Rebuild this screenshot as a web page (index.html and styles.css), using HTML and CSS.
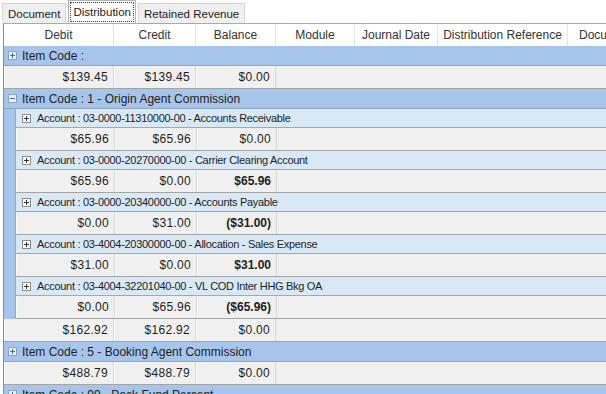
FILE: index.html
```html
<!DOCTYPE html>
<html lang="en">
<head>
  <meta charset="UTF-8">
  <title>Distribution</title>
  <link rel="stylesheet" href="styles.css">
</head>
<body>
  <div class="tabs">
    <div class="tab">Document</div>
    <div class="tab active"><span class="focus">Distribution</span></div>
    <div class="tab">Retained Revenue</div>
  </div>

  <div class="grid">
    <div class="head">
      <div class="hc c-debit">Debit</div>
      <div class="hc c-credit">Credit</div>
      <div class="hc c-bal">Balance</div>
      <div class="hc c-mod">Module</div>
      <div class="hc c-date">Journal Date</div>
      <div class="hc c-ref">Distribution Reference</div>
      <div class="hc c-doc">Document</div>
    </div>

    <div class="group"><span class="tog plus"></span>Item Code :</div>
    <div class="vals">
      <div class="vc c-debit">$139.45</div>
      <div class="vc c-credit">$139.45</div>
      <div class="vc c-bal">$0.00</div>
    </div>

    <div class="group"><span class="tog minus"></span>Item Code : 1 - Origin Agent Commission</div>
    <div class="nest">
      <div class="strip"></div>
      <div class="nest-body">
        <div class="acct"><span class="box"></span>Account : 03-0000-11310000-00 - Accounts Receivable</div>
        <div class="vals">
          <div class="vc c-debit">$65.96</div>
          <div class="vc c-credit">$65.96</div>
          <div class="vc c-bal">$0.00</div>
        </div>
        <div class="acct"><span class="box"></span>Account : 03-0000-20270000-00 - Carrier Clearing Account</div>
        <div class="vals">
          <div class="vc c-debit">$65.96</div>
          <div class="vc c-credit">$0.00</div>
          <div class="vc c-bal strong">$65.96</div>
        </div>
        <div class="acct"><span class="box"></span>Account : 03-0000-20340000-00 - Accounts Payable</div>
        <div class="vals">
          <div class="vc c-debit">$0.00</div>
          <div class="vc c-credit">$31.00</div>
          <div class="vc c-bal strong">($31.00)</div>
        </div>
        <div class="acct"><span class="box"></span>Account : 03-4004-20300000-00 - Allocation - Sales Expense</div>
        <div class="vals">
          <div class="vc c-debit">$31.00</div>
          <div class="vc c-credit">$0.00</div>
          <div class="vc c-bal strong">$31.00</div>
        </div>
        <div class="acct"><span class="box"></span>Account : 03-4004-32201040-00 - VL COD Inter HHG Bkg OA</div>
        <div class="vals">
          <div class="vc c-debit">$0.00</div>
          <div class="vc c-credit">$65.96</div>
          <div class="vc c-bal strong">($65.96)</div>
        </div>
      </div>
    </div>
    <div class="vals">
      <div class="vc c-debit">$162.92</div>
      <div class="vc c-credit">$162.92</div>
      <div class="vc c-bal">$0.00</div>
    </div>

    <div class="group"><span class="tog plus"></span>Item Code : 5 - Booking Agent Commission</div>
    <div class="vals">
      <div class="vc c-debit">$488.79</div>
      <div class="vc c-credit">$488.79</div>
      <div class="vc c-bal">$0.00</div>
    </div>

    <div class="group"><span class="tog plus"></span>Item Code : 99 - Pack Fund Percent</div>
  </div>
</body>
</html>
```

FILE: styles.css
```css
body { margin: 0; font-family: "Liberation Sans", Arial, sans-serif; font-size: 12px; color: #1e1e1e; background: #fff; overflow: hidden; }

/* tab strip */
.tabs { display: flex; align-items: flex-end; height: 23px; padding-left: 2px; font-size: 11.5px; }
.tab { height: 20px; line-height: 20px; padding: 0 5px; margin-right: 2px; background: #efefef; border: 1px solid #d4d4d4; border-bottom: none; box-sizing: border-box; }
.tab.active { height: 23px; padding: 1px 1px 0; background: #fff; border-color: #b4b4b4; }
.focus { display: block; height: 20px; line-height: 19px; padding: 0 2px; border: 1px dotted #444; box-sizing: border-box; }

/* grid */
.grid { margin-left: 3px; border-left: 1px solid #8e8e8e; border-top: 1px solid #a9a9a9; }
.head { display: flex; height: 22px; background: #fff; }
.hc { flex: none; line-height: 22px; text-align: center; color: #333; border-right: 1px solid #e4e4e4; box-sizing: border-box; white-space: nowrap; overflow: hidden; }

.c-debit { width: 110px; }
.c-credit { width: 82px; }
.c-bal { width: 80px; }
.c-mod { width: 79px; }
.c-date { width: 83px; }
.c-ref { width: 130px; }
.c-doc { width: 80px; text-align: left; padding-left: 11px; }

.group { display: flex; align-items: center; height: 20px; padding-left: 4px; background: #a7c5ea; border-bottom: 1px solid #8ea4bf; box-sizing: border-box; white-space: nowrap; }
.tog { position: relative; width: 9px; height: 9px; margin-right: 5px; background: #e6eef8; border: 1px solid #8aa3c2; box-sizing: border-box; }
.tog::before { content: ""; position: absolute; left: 1px; top: 3px; width: 5px; height: 1px; background: #4f6a8c; }
.tog.plus::after { content: ""; position: absolute; left: 3px; top: 1px; width: 1px; height: 5px; background: #4f6a8c; }

.nest { display: flex; }
.strip { flex: none; width: 11px; background: #a7c5ea; border-right: 1px solid #90a9c6; }
.nest-body { flex: 1; }
.nest-body .c-debit { width: 99px; }

.acct { display: flex; align-items: center; height: 19px; padding-left: 6px; font-size: 11px; letter-spacing: -0.3px; background: #d9e8f5; border-bottom: 1px solid #9fa9b3; box-sizing: border-box; white-space: nowrap; }
.box { position: relative; flex: none; width: 9px; height: 9px; margin-right: 6px; background: #fff; border: 1px solid #8c8c8c; box-sizing: border-box; }
.box::before { content: ""; position: absolute; left: 1px; top: 3px; width: 5px; height: 1px; background: #333; }
.box::after { content: ""; position: absolute; left: 3px; top: 1px; width: 1px; height: 5px; background: #333; }

.vals { display: flex; height: 23px; background: #f0f0f0; border-bottom: 1px solid #a4a4a4; box-sizing: border-box; }
.vc { flex: none; line-height: 22px; text-align: right; padding-right: 5px; letter-spacing: 0.3px; border-left: 1px solid #fbfbfb; border-right: 1px solid #d7d7d7; box-sizing: border-box; }
.vc.strong { font-weight: bold; letter-spacing: 0; }
```
